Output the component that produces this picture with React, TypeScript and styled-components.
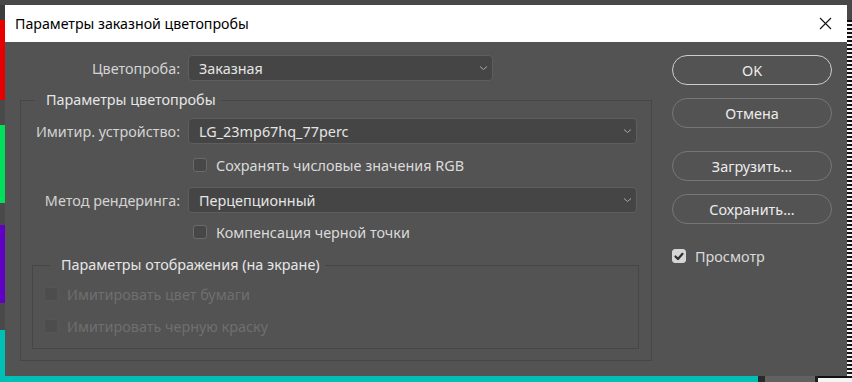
import React from "react";
import styled, { createGlobalStyle } from "styled-components";

const Global = createGlobalStyle`
  html, body { margin: 0; padding: 0; background: #3e3e3e; }
  body { font-family: "Segoe UI", "Noto Sans", "Open Sans", sans-serif; }
  * { box-sizing: border-box; }
`;

const Stage = styled.div`
  width: 852px;
  height: 382px;
  display: grid;
  grid-template-columns: 5px 842px 5px;
  grid-template-rows: 5px 371px 6px;
  grid-template-areas:
    "top top top"
    "left dialog right"
    "bottom bottom bottom";
  overflow: hidden;
`;

const TopEdge = styled.div`
  grid-area: top;
  background: #484848;
`;

const LeftEdge = styled.div`
  grid-area: left;
  display: flex;
  flex-direction: column;
`;

const Swatch = styled.div<{ $c: string; $h: number }>`
  height: ${(p) => p.$h}px;
  background: ${(p) => p.$c};
  flex-shrink: 0;
`;

const RightEdge = styled.div`
  grid-area: right;
  display: flex;
  flex-direction: column;
`;

const Stripes = styled.div`
  flex: 1;
  background: repeating-linear-gradient(
    to bottom,
    #101010 0px,
    #101010 2px,
    #f2f2f2 2px,
    #f2f2f2 4px
  );
`;

const BottomEdge = styled.div`
  grid-area: bottom;
  display: flex;
`;

const BottomPart = styled.div<{ $c: string; $w?: number }>`
  background: ${(p) => p.$c};
  ${(p) => (p.$w ? `width: ${p.$w}px; flex-shrink: 0;` : "flex: 1;")}
`;

const BottomWhite = styled.div`
  flex: 1;
  background: #f4f4f4;
  border-top: 2px solid #111;
`;

const Dialog = styled.div`
  grid-area: dialog;
  background: #535353;
  display: flex;
  flex-direction: column;
  color: #d8d8d8;
  font-size: 14.4px;
`;

const TitleBar = styled.div`
  height: 37px;
  background: #ffffff;
  display: flex;
  align-items: center;
  justify-content: space-between;
  padding: 0 15px 0 10px;
  color: #000;
  font-size: 14.2px;
`;

const CloseButton = styled.div`
  width: 14px;
  height: 14px;
  display: flex;
  align-items: center;
  justify-content: center;
`;

const Body = styled.div`
  flex: 1;
  display: flex;
  padding: 13px 0 0 15px;
  gap: 20px;
`;

const LeftCol = styled.div`
  width: 632px;
  display: flex;
  flex-direction: column;
`;

const RightCol = styled.div`
  width: 160px;
  display: flex;
  flex-direction: column;
`;

const FieldRow = styled.div<{ $mt?: number; $mr?: number }>`
  display: flex;
  align-items: center;
  gap: 8px;
  margin-top: ${(p) => p.$mt ?? 0}px;
  margin-right: ${(p) => p.$mr ?? 0}px;
`;

const Label = styled.div<{ $w: number }>`
  width: ${(p) => p.$w}px;
  text-align: right;
  flex-shrink: 0;
  color: #d4d4d4;
  white-space: nowrap;
`;

const Select = styled.div<{ $w?: number }>`
  height: 26px;
  ${(p) => (p.$w ? `width: ${p.$w}px;` : "flex: 1;")}
  background: #454545;
  border: 1px solid #5e5e5e;
  border-radius: 4px;
  display: flex;
  align-items: center;
  justify-content: space-between;
  padding: 0 4px 0 10px;
  color: #e4e4e4;
`;

const Group = styled.fieldset<{ $m: string; $p: string }>`
  margin: ${(p) => p.$m};
  padding: ${(p) => p.$p};
  border: 1px solid #464646;
  min-width: 0;
  display: flex;
  flex-direction: column;
`;

const Legend = styled.legend<{ $inset: number }>`
  margin-left: ${(p) => p.$inset}px;
  padding: 0 5px 0 11px;
  line-height: 20px;
  color: #e6e6e6;
  white-space: nowrap;
`;

const CheckRow = styled.label<{ $ml?: number; $mt?: number; $disabled?: boolean }>`
  display: flex;
  align-items: center;
  gap: 9px;
  height: 20px;
  margin-left: ${(p) => p.$ml ?? 0}px;
  margin-top: ${(p) => p.$mt ?? 0}px;
  color: ${(p) => (p.$disabled ? "#6f6f6f" : "#dadada")};
  white-space: nowrap;
`;

const Box = styled.span<{ $checked?: boolean; $disabled?: boolean }>`
  width: 14px;
  height: 14px;
  border-radius: 3px;
  flex-shrink: 0;
  display: flex;
  align-items: center;
  justify-content: center;
  background: ${(p) => (p.$checked ? "#d6d6d6" : p.$disabled ? "#4d4d4d" : "#474747")};
  border: 1px solid
    ${(p) => (p.$checked ? "#d6d6d6" : p.$disabled ? "#555555" : "#6a6a6a")};
`;

const Button = styled.div<{ $primary?: boolean; $mt: number }>`
  height: 30px;
  margin-top: ${(p) => p.$mt}px;
  border-radius: 15px;
  border: 1px solid ${(p) => (p.$primary ? "#cdcdcd" : "#777777")};
  display: flex;
  align-items: center;
  justify-content: center;
  color: #ececec;
`;

const Chevron = () => (
  <svg width="9" height="6" viewBox="0 0 9 6">
    <polyline points="1,1.5 4.5,4.5 8,1.5" fill="none" stroke="#a8a8a8" strokeWidth="1" />
  </svg>
);

const Check = () => (
  <svg width="10" height="9" viewBox="0 0 10 9">
    <polyline
      points="1.5,4.5 4,7 8.5,1.8"
      fill="none"
      stroke="#2e2e2e"
      strokeWidth="2.2"
      strokeLinecap="round"
      strokeLinejoin="round"
    />
  </svg>
);

const CloseIcon = () => (
  <svg width="13" height="13" viewBox="0 0 13 13">
    <path d="M1 1 L12 12 M12 1 L1 12" stroke="#111" strokeWidth="1.1" />
  </svg>
);

export default function App() {
  return (
    <>
      <Global />
      <Stage>
        <TopEdge />
        <LeftEdge>
          <Swatch $c="#3c3c3c" $h={15} />
          <Swatch $c="#e80000" $h={80} />
          <Swatch $c="#4a4a4a" $h={25} />
          <Swatch $c="#00e05a" $h={78} />
          <Swatch $c="#4a4a4a" $h={22} />
          <Swatch $c="#5f00c4" $h={78} />
          <Swatch $c="#4a4a4a" $h={27} />
          <Swatch $c="#00c0b6" $h={46} />
        </LeftEdge>
        <Dialog>
          <TitleBar>
            <span>Параметры заказной цветопробы</span>
            <CloseButton>
              <CloseIcon />
            </CloseButton>
          </TitleBar>
          <Body>
            <LeftCol>
              <FieldRow>
                <Label $w={160}>Цветопроба:</Label>
                <Select $w={305}>
                  <span>Заказная</span>
                  <Chevron />
                </Select>
              </FieldRow>
              <Group $m="9px 0 0 0" $p="8px 0 11px 0">
                <Legend $inset={14}>Параметры цветопробы</Legend>
                <FieldRow $mr={14}>
                  <Label $w={159}>Имитир. устройство:</Label>
                  <Select>
                    <span>LG_23mp67hq_77perc</span>
                    <Chevron />
                  </Select>
                </FieldRow>
                <CheckRow $ml={172} $mt={11}>
                  <Box />
                  Сохранять числовые значения RGB
                </CheckRow>
                <FieldRow $mr={14} $mt={12}>
                  <Label $w={159}>Метод рендеринга:</Label>
                  <Select>
                    <span>Перцепционный</span>
                    <Chevron />
                  </Select>
                </FieldRow>
                <CheckRow $ml={172} $mt={9}>
                  <Box />
                  Компенсация черной точки
                </CheckRow>
                <Group $m="13px 12px 0 11px" $p="9px 0 12px 11px">
                  <Legend $inset={6}>Параметры отображения (на экране)</Legend>
                  <CheckRow $disabled>
                    <Box $disabled />
                    Имитировать цвет бумаги
                  </CheckRow>
                  <CheckRow $disabled $mt={12}>
                    <Box $disabled />
                    Имитировать черную краску
                  </CheckRow>
                </Group>
              </Group>
            </LeftCol>
            <RightCol>
              <Button $primary $mt={0}>OK</Button>
              <Button $mt={13}>Отмена</Button>
              <Button $mt={23}>Загрузить...</Button>
              <Button $mt={13}>Сохранить...</Button>
              <CheckRow $mt={22}>
                <Box $checked>
                  <Check />
                </Box>
                Просмотр
              </CheckRow>
            </RightCol>
          </Body>
        </Dialog>
        <RightEdge>
          <Swatch $c="#484848" $h={15} />
          <Stripes />
        </RightEdge>
        <BottomEdge>
          <BottomPart $c="#00c0b6" $w={758} />
          <BottomPart $c="#2a2a2a" $w={7} />
          <BottomPart $c="#616161" $w={50} />
          <BottomPart $c="#1e1e1e" $w={3} />
          <BottomWhite />
        </BottomEdge>
      </Stage>
    </>
  );
}
